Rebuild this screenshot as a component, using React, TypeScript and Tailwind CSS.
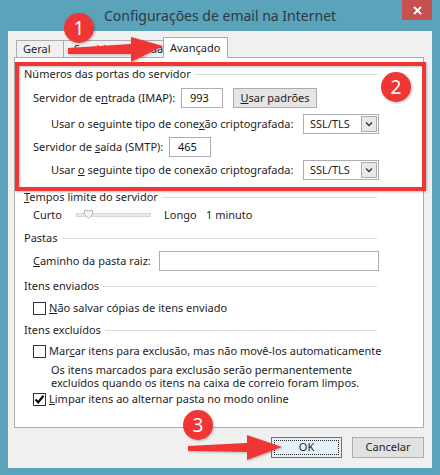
import React from 'react'

function Check({ checked = false }: { checked?: boolean }) {
  return (
    <div className="w-[13px] h-[13px] border border-[#333333] bg-white flex items-center justify-center shrink-0">
      {checked && (
        <svg width="11" height="11" viewBox="0 0 11 11">
          <path d="M1.5 5.5 L4.2 8.3 L9.5 1.8" stroke="#111" strokeWidth="2.2" fill="none" />
        </svg>
      )}
    </div>
  )
}

function GroupTitle({ children }: { children: React.ReactNode }) {
  return (
    <div className="h-[16px] flex items-center pr-[46px]">
      <span className="whitespace-nowrap">{children}</span>
      <div className="flex-1 h-px bg-[#dcdcdc] ml-[4px]" />
    </div>
  )
}

function Select() {
  return (
    <div className="w-[76px] h-[20px] border border-[#abadb3] bg-white flex items-center">
      <span className="flex-1 pl-[6px] text-[#222]">SSL/TLS</span>
      <div className="w-[16px] h-[16px] mr-[1px] border border-[#acacac] bg-[#e8e8e8] flex items-center justify-center">
        <svg width="8" height="6" viewBox="0 0 8 6">
          <path d="M1 1.5 L4 4.5 L7 1.5" stroke="#333" strokeWidth="1.3" fill="none" />
        </svg>
      </div>
    </div>
  )
}

function Field({ value, w }: { value?: string; w: string }) {
  return (
    <div className={`${w} h-[20px] border border-[#abadb3] bg-white flex items-center pl-[8px] text-[#111]`}>
      {value}
    </div>
  )
}

export default function App() {
  return (
    <div className="w-[440px] h-[475px] bg-[#5ba2bb] relative flex flex-col font-['Noto_Sans',sans-serif] text-[11px] text-[#1e1e1e] overflow-hidden">
      {/* title bar */}
      <div className="h-[31px] grid grid-cols-[1fr_auto_1fr]">
        <div />
        <div className="flex items-center text-[14px] text-[#2c3a44] pb-[1px]">Configurações de email na Internet</div>
        <div className="flex justify-end pr-[8px]">
          <div className="w-[30px] h-[20px] bg-[#c75050] flex items-center justify-center">
            <svg width="9" height="9" viewBox="0 0 9 9">
              <path d="M1 1 L8 8 M8 1 L1 8" stroke="white" strokeWidth="1.8" />
            </svg>
          </div>
        </div>
      </div>

      {/* client area */}
      <div className="mx-[8px] h-[437px] bg-[#f0f0f0] flex flex-col">
        {/* tabs */}
        <div className="h-[27px] pl-[8px] flex items-end relative">
          <div className="w-[48px] h-[17px] mb-px border border-b-0 border-[#acacac] bg-[#f0f0f0] pl-[6px] flex items-center">Geral</div>
          <div className="w-[100px] h-[17px] mb-px border border-b-0 border-l-0 border-[#acacac] bg-[#f0f0f0] pl-[10px] flex items-center whitespace-nowrap overflow-hidden">Servidor de saída</div>
          <div className="w-[65px] h-[21px] border border-b-0 border-[#acacac] bg-white pl-[6px] flex items-center -ml-px">Avançado</div>
        </div>

        {/* tab panel */}
        <div className="ml-[6px] w-[410px] h-[371px] -mt-px bg-white border border-[#acacac] pl-[9px] pt-[8px] flex flex-col">
          <GroupTitle>Números das portas do servidor</GroupTitle>

          <div className="mt-[6px] h-[20px] flex items-center pl-[9px]">
            <span className="w-[148px]">Servidor de e<u>n</u>trada (IMAP):</span>
            <Field value="993" w="w-[42px]" />
            <div className="ml-[10px] w-[84px] h-[20px] border border-[#acacac] bg-[#e5e5e5] flex items-center justify-center">
              <span><u>U</u>sar padrões</span>
            </div>
          </div>

          <div className="mt-[6px] h-[20px] flex items-center pl-[27px]">
            <span className="w-[252px]">Usar o seguinte tipo de cone<u>x</u>ão criptografada:</span>
            <Select />
          </div>

          <div className="mt-[3px] h-[20px] flex items-center pl-[9px]">
            <span className="w-[136px]">Servidor de <u>s</u>aída (SMTP):</span>
            <Field value="465" w="w-[42px]" />
          </div>

          <div className="mt-[3px] h-[20px] flex items-center pl-[27px]">
            <span className="w-[252px]">Usar <u>o</u> seguinte tipo de conexão criptografada:</span>
            <Select />
          </div>

          <div className="mt-[9px]">
            <GroupTitle><u>T</u>empos limite do servidor</GroupTitle>
          </div>
          <div className="mt-[2px] h-[16px] flex items-center pl-[9px]">
            <span className="w-[43px]">Curto</span>
            <div className="w-[75px] h-[16px] relative flex items-center">
              <div className="w-full h-[4px] bg-[#e7eaea] border border-[#d6d6d6]" />
              <svg className="absolute left-[8px] top-[3px]" width="9" height="9" viewBox="0 0 9 9">
                <path d="M0.5 0.5 H8.5 V4.5 L4.5 8.5 L0.5 4.5 Z" fill="#f3f3f3" stroke="#b8b8b8" />
              </svg>
            </div>
            <span className="ml-[13px] w-[42px]">Longo</span>
            <span>1 minuto</span>
          </div>

          <div className="mt-[7px]">
            <GroupTitle>Pastas</GroupTitle>
          </div>
          <div className="mt-[5px] h-[20px] flex items-center pl-[9px]">
            <span className="w-[126px]"><u>C</u>aminho da pasta raiz:</span>
            <Field w="w-[220px]" />
          </div>

          <div className="mt-[7px]">
            <GroupTitle>Itens enviados</GroupTitle>
          </div>
          <div className="mt-[6px] h-[16px] flex items-center pl-[9px] gap-[3px]">
            <Check />
            <span><u>N</u>ão salvar cópias de itens enviado</span>
          </div>

          <div className="mt-[6px]">
            <GroupTitle>Itens excluídos</GroupTitle>
          </div>
          <div className="mt-[5px] h-[16px] flex items-center pl-[9px] gap-[3px]">
            <Check />
            <span>Mar<u>c</u>ar itens para exclusão, mas não movê-los automaticamente</span>
          </div>
          <div className="mt-[4px] pl-[27px] leading-[13px]">
            <p>Os itens marcados para exclusão serão permanentemente</p>
            <p>excluídos quando os itens na caixa de correio foram limpos.</p>
          </div>
          <div className="mt-[2px] h-[16px] flex items-center pl-[9px] gap-[3px]">
            <Check checked />
            <span><u>L</u>impar itens ao alternar pasta no modo online</span>
          </div>
        </div>

        {/* buttons */}
        <div className="mt-[9px] pr-[8px] flex justify-end gap-[10px]">
          <div className="w-[71px] h-[21px] border border-[#3c7fb1] bg-[#e5f1fb] p-[2px]">
            <div className="w-full h-full border border-dotted border-[#222] flex items-center justify-center">OK</div>
          </div>
          <div className="w-[72px] h-[21px] border border-[#adadad] bg-[#e1e1e1] flex items-center justify-center">Cancelar</div>
        </div>
      </div>

      {/* annotations drawn over the dialog */}
      <svg className="absolute inset-0 z-20 pointer-events-none" width="440" height="475" viewBox="0 0 440 475">
        <defs>
          <filter id="sh" x="-20%" y="-20%" width="140%" height="140%">
            <feDropShadow dx="1" dy="1" stdDeviation="1" floodColor="#000" floodOpacity="0.25" />
          </filter>
        </defs>
        <g filter="url(#sh)" fill="#f03535">
          <rect x="17" y="64" width="407" height="125" fill="none" stroke="#f03535" strokeWidth="4" />
          <polygon points="68,48 131,44 131,37 163,46 131,62 131,54 68,54" />
          <polygon points="188,446 247,443 247,435 282,447 247,460 247,452 188,451" />
          <circle cx="79" cy="28" r="15" />
          <circle cx="396" cy="87" r="15" />
          <circle cx="198" cy="425" r="15" />
        </g>
        <g fill="white" fontFamily="Noto Sans, sans-serif" fontSize="19" textAnchor="middle">
          <text x="79" y="35">1</text>
          <text x="396" y="94">2</text>
          <text x="198" y="432">3</text>
        </g>
      </svg>
    </div>
  )
}
